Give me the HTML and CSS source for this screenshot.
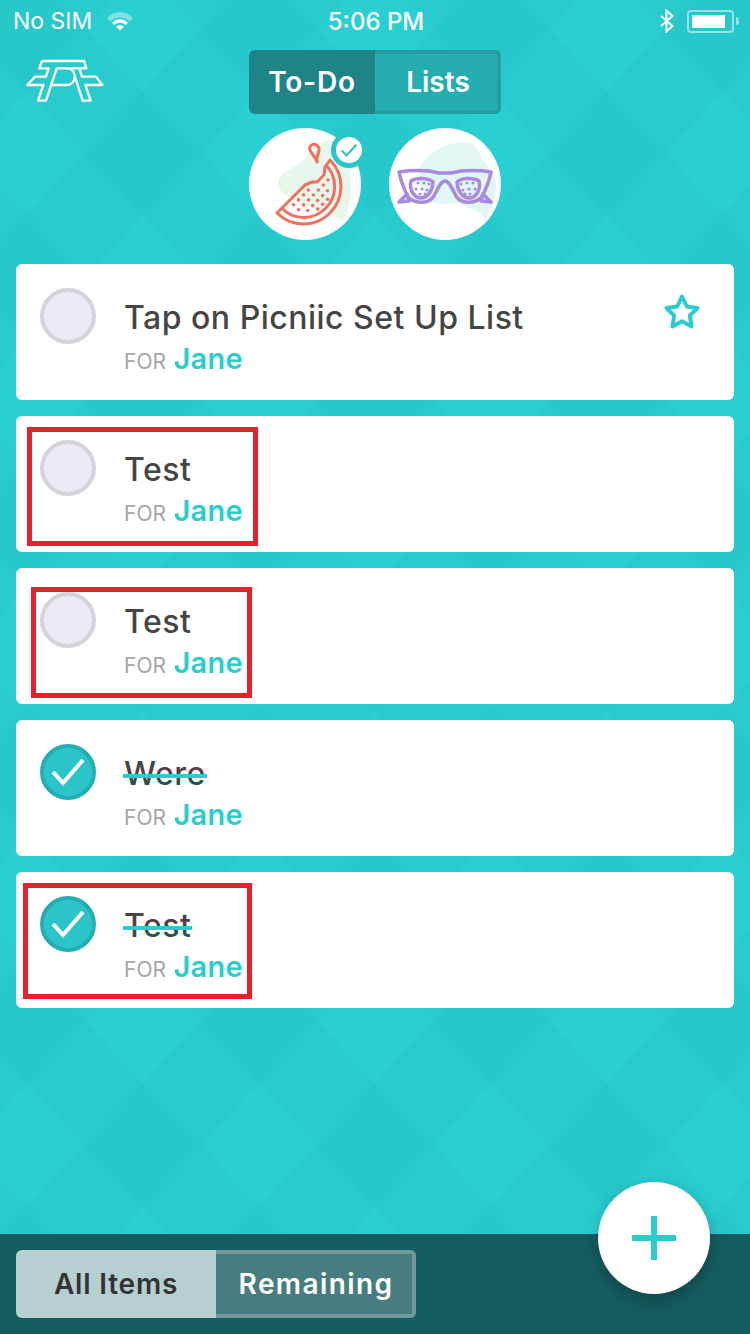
FILE: index.html
```html
<!DOCTYPE html>
<html lang="en">
<head>
<meta charset="UTF-8">
<meta name="viewport" content="width=device-width, initial-scale=1.0">
<title>Picniic To-Do</title>
<link rel="stylesheet" href="styles.css">
</head>
<body>
<div class="screen">
    <div class="status-bar">
        <div class="status-left">
            <span>No SIM</span>
            <svg class="wifi" width="26" height="20" viewBox="0 0 26 20">
                <path d="M0 7 C8 -1 18 -1 26 7 L22.500 10.500 C16.500 5 9.500 5 3.500 10.500 Z" fill="#fff" opacity="0.4"/>
                <path d="M5 11.500 C10 7 16 7 21 11.500 L18.500 14 C15 11 11 11 7.500 14 Z" fill="#fff"/>
                <path d="M9 15.500 C11.500 13.500 14.500 13.500 17 15.500 L13 19.500 Z" fill="#fff"/>
            </svg>
        </div>
        <div class="status-time">5:06 PM</div>
        <div class="status-right">
            <svg width="14" height="24" viewBox="0 0 14 24">
                <path d="M1 7 L12.500 17 L6.500 22.500 V1.500 L12.500 7 L1 17" fill="none" stroke="#fff" stroke-width="2"/>
            </svg>
            <div class="battery"><div class="battery-fill"></div></div>
            <div class="battery-nub"></div>
        </div>
    </div>

    <header class="top-bar">
        <svg class="logo" width="90" height="60" viewBox="0 0 270 180">
            <g fill="none" stroke="#fff" stroke-width="7" stroke-linejoin="round">
                <path d="M66 33 H192 L199 55 H178 L186 80 H228 L247 105 H196 L212 152 H188 L164 78"/>
                <path d="M66 33 L58 55 H86 L78 80 H45 L22 105 H70 L54 152 H78 L110 55 H178"/>
                <path d="M146 55 C172 62 170 105 140 105 H96"/>
            </g>
        </svg>
        <div class="seg">
            <div class="seg-item seg-on">To-Do</div>
            <div class="seg-item">Lists</div>
        </div>
    </header>

    <div class="avatars">
        <div class="avatar">
            <svg width="112" height="112" viewBox="0 0 112 112">
                <path d="M29 55 C30 42 48 42 58 28 C66 14 80 8 92 16 C104 40 106 70 95 92 C84 86 70 84 52 74 C40 70 30 66 29 55 Z" fill="#e9f6ec"/>
                <g fill="none" stroke="#f0705f" stroke-width="3" stroke-linejoin="round">
                    <path d="M28 85 L56 57 L63 54 L68 54 L75 47 L76 39 L81 32 A 37 37 0 0 1 28 85 Z"/>
                    <path d="M33 80.500 A 30 30 0 0 0 76.500 36.500"/>
                    <path d="M62 24 C57 17 67 13 70 20 C71 25 67 26 68 34 C66 29 64 27 62 24 Z"/>
                </g>
                <g fill="#f0705f">
                    <circle cx="44.600" cy="76.800" r="1.800"/><circle cx="49.500" cy="71.900" r="1.800"/><circle cx="54.500" cy="66.900" r="1.800"/><circle cx="59.400" cy="62" r="1.800"/>
                    <circle cx="49.600" cy="81.800" r="1.800"/><circle cx="54.500" cy="76.900" r="1.800"/><circle cx="59.500" cy="71.900" r="1.800"/><circle cx="64.400" cy="67" r="1.800"/><circle cx="69.400" cy="62" r="1.800"/><circle cx="74.300" cy="57.100" r="1.800"/>
                    <circle cx="58.700" cy="82.500" r="1.800"/><circle cx="63.700" cy="77.600" r="1.800"/><circle cx="68.600" cy="72.600" r="1.800"/><circle cx="73.600" cy="67.600" r="1.800"/><circle cx="78.500" cy="62.700" r="1.800"/>
                    <circle cx="68.700" cy="81.100" r="1.800"/><circle cx="73.600" cy="76.200" r="1.800"/><circle cx="78.600" cy="71.200" r="1.800"/><circle cx="79" cy="52" r="1.800"/>
                </g>
            </svg>
            <div class="avatar-badge">
                <svg width="22" height="18" viewBox="0 0 22 18">
                    <path d="M2 9 L8 15 L20 2" fill="none" stroke="#2ac5c8" stroke-width="2.500"/>
                </svg>
            </div>
        </div>
        <div class="avatar">
            <svg width="112" height="112" viewBox="0 0 112 112">
                <path d="M33 35 C42 22 62 12 80 15 C92 18 92 36 104 44 C110 60 106 78 96 92 C92 82 78 80 72 76 C60 74 52 78 44 74 C30 64 26 46 33 35 Z" fill="#e3f6f6"/>
                <g fill="none" stroke="#a88bdc" stroke-width="3.500" stroke-linejoin="round">
                    <path d="M10 44 C24 42 38 42 50 45 H62 C74 42 88 42 102 44 L100 52 C98 58 96 64 92 70 C84 76 72 76 67 68 C63 60 60 53 56 53 C52 53 49 60 45 68 C40 76 28 76 20 70 C16 64 14 58 12 52 Z"/>
                    <path d="M22 53 C28 49 40 50 44 54 C44 60 40 70 32 70 C24 70 20 60 22 53 Z"/>
                    <path d="M68 54 C72 50 84 49 90 53 C92 60 88 70 80 70 C72 70 68 60 68 54 Z"/>
                    <path d="M10 74 L18 66 L20 73 Z"/>
                    <path d="M102 74 L94 66 L92 73 Z"/>
                </g>
                <g fill="#a88bdc">
                    <circle cx="29" cy="55" r="1.500"/><circle cx="35" cy="55" r="1.500"/><circle cx="40" cy="56" r="1.500"/>
                    <circle cx="27" cy="61" r="1.500"/><circle cx="33" cy="61" r="1.500"/><circle cx="38" cy="62" r="1.500"/>
                    <circle cx="31" cy="66" r="1.500"/><circle cx="36" cy="66" r="1.500"/>
                    <circle cx="72" cy="56" r="1.500"/><circle cx="78" cy="55" r="1.500"/><circle cx="84" cy="55" r="1.500"/>
                    <circle cx="74" cy="62" r="1.500"/><circle cx="80" cy="61" r="1.500"/><circle cx="86" cy="61" r="1.500"/>
                    <circle cx="76" cy="66" r="1.500"/><circle cx="81" cy="66" r="1.500"/>
                </g>
            </svg>
        </div>
    </div>

    <main class="todo-list">
        <div class="card">
            <div class="check"></div>
            <div class="card-text">
                <div class="title">Tap on Picniic Set Up List</div>
                <div class="owner"><span class="for">FOR</span> <span class="name">Jane</span></div>
            </div>
            <svg class="star" width="38" height="38" viewBox="0 0 38 38">
                <path d="M19 3.500 L23.800 13.500 L34.500 15 L26.800 22.700 L28.600 33.500 L19 28.300 L9.400 33.500 L11.200 22.700 L3.500 15 L14.200 13.500 Z" fill="none" stroke="#2accce" stroke-width="4" stroke-linejoin="round"/>
            </svg>
        </div>
        <div class="card">
            <div class="check"></div>
            <div class="card-text">
                <div class="title">Test</div>
                <div class="owner"><span class="for">FOR</span> <span class="name">Jane</span></div>
            </div>
            <div class="mark mark-one"></div>
        </div>
        <div class="card">
            <div class="check"></div>
            <div class="card-text">
                <div class="title">Test</div>
                <div class="owner"><span class="for">FOR</span> <span class="name">Jane</span></div>
            </div>
            <div class="mark mark-two"></div>
        </div>
        <div class="card">
            <div class="check check-done">
                <svg width="34" height="28" viewBox="0 0 34 28"><path d="M2 14 L12 25 L32 2" fill="none" stroke="#fff" stroke-width="4"/></svg>
            </div>
            <div class="card-text">
                <div class="title"><span class="title-done">Were</span></div>
                <div class="owner"><span class="for">FOR</span> <span class="name">Jane</span></div>
            </div>
        </div>
        <div class="card">
            <div class="check check-done">
                <svg width="34" height="28" viewBox="0 0 34 28"><path d="M2 14 L12 25 L32 2" fill="none" stroke="#fff" stroke-width="4"/></svg>
            </div>
            <div class="card-text">
                <div class="title"><span class="title-done">Test</span></div>
                <div class="owner"><span class="for">FOR</span> <span class="name">Jane</span></div>
            </div>
            <div class="mark mark-three"></div>
        </div>
    </main>

    <footer class="bottom-bar">
        <div class="filter">
            <div class="filter-item filter-on">All Items</div>
            <div class="filter-item">Remaining</div>
        </div>
        <div class="fab">
            <svg width="46" height="46" viewBox="0 0 46 46"><path d="M23 1 V45 M1 23 H45" stroke="#2accce" stroke-width="6"/></svg>
        </div>
    </footer>
</div>
</body>
</html>
```

FILE: styles.css
```css
* {
    box-sizing: border-box;
}

body {
    margin: 0;
    font-family: Inter, "Noto Sans", sans-serif;
}

/* harlequin background: two sets of diagonal bands, 232x248 tile */
.screen {
    width: 750px;
    height: 1334px;
    display: flex;
    flex-direction: column;
    overflow: hidden;
    background-color: #2acfd1;
    background-image:
        linear-gradient(to bottom right,
            rgba(20, 110, 120, 0.04) 12%, rgba(20, 110, 120, 0) 13%,
            rgba(20, 110, 120, 0) 37%, rgba(20, 110, 120, 0.04) 38%,
            rgba(20, 110, 120, 0.04) 62%, rgba(20, 110, 120, 0) 63%,
            rgba(20, 110, 120, 0) 87%, rgba(20, 110, 120, 0.04) 88%),
        linear-gradient(to top right,
            rgba(20, 110, 120, 0.04) 12%, rgba(20, 110, 120, 0) 13%,
            rgba(20, 110, 120, 0) 37%, rgba(20, 110, 120, 0.04) 38%,
            rgba(20, 110, 120, 0.04) 62%, rgba(20, 110, 120, 0) 63%,
            rgba(20, 110, 120, 0) 87%, rgba(20, 110, 120, 0.04) 88%);
    background-size: 232px 248px;
    background-position: 143px 153px;
}

.status-bar {
    height: 40px;
    flex: none;
    display: grid;
    grid-template-columns: 1fr auto 1fr;
    align-items: center;
    padding: 2px 11px 0 13px;
    color: #fff;
    font-size: 23px;
}

.status-left {
    display: flex;
    align-items: center;
    gap: 15px;
}

.status-time {
    font-size: 24px;
    font-weight: 500;
}

.status-right {
    display: flex;
    align-items: center;
    justify-content: flex-end;
}

.status-right svg {
    margin-right: 13px;
}

.battery {
    width: 47px;
    height: 23px;
    padding: 3px;
    border: 2px solid rgba(255, 255, 255, 0.5);
    border-radius: 4px;
}

.battery-fill {
    width: 33px;
    height: 100%;
    background: #fff;
}

.battery-nub {
    width: 3px;
    height: 8px;
    margin-left: 2px;
    background: rgba(255, 255, 255, 0.5);
    border-radius: 0 3px 3px 0;
}

.top-bar {
    flex: none;
    margin-top: 10px;
    height: 64px;
    display: grid;
    grid-template-columns: 1fr auto 1fr;
}

.logo {
    margin-left: 20px;
}

.seg {
    display: flex;
    width: 252px;
    height: 64px;
    border-radius: 6px;
    overflow: hidden;
    color: #fff;
    font-size: 28px;
    font-weight: 600;
}

.seg-item {
    flex: 0 0 50%;
    display: flex;
    align-items: center;
    justify-content: center;
    padding-left: 4px;
    border: 4px solid #229ea3;
    border-left: 0;
    background: #25adb0;
}

.seg-on {
    padding-left: 0;
    border: 0;
    background: #1f8488;
    letter-spacing: 0.8px;
}

.avatars {
    flex: none;
    margin-top: 14px;
    display: flex;
    justify-content: center;
    gap: 28px;
}

.avatar {
    position: relative;
    width: 112px;
    height: 112px;
    border-radius: 50%;
    background: #fff;
}

.avatar > svg {
    display: block;
}

.avatar-badge {
    position: absolute;
    top: 4px;
    right: -6px;
    width: 36px;
    height: 36px;
    display: flex;
    align-items: center;
    justify-content: center;
    border: 5px solid #2ac5c8;
    border-radius: 50%;
    background: #fff;
}

.avatar-badge svg {
    width: 18px;
    height: 15px;
}

.todo-list {
    flex: none;
    margin-top: 24px;
    padding: 0 16px;
    display: flex;
    flex-direction: column;
    gap: 16px;
}

.card {
    position: relative;
    height: 136px;
    padding: 24px;
    display: flex;
    gap: 28px;
    background: #fff;
    border-radius: 6px;
}

.check {
    flex: none;
    width: 56px;
    height: 56px;
    display: flex;
    align-items: center;
    justify-content: center;
    border: 4px solid #d4d4dc;
    border-radius: 50%;
    background: #ecebf3;
}

.check-done {
    border-color: #25aeb2;
    background: #2bc4c8;
}

.card-text {
    flex: 1;
}

.title {
    height: 44px;
    margin-top: 8px;
    line-height: 44px;
    font-size: 32px;
    font-weight: 500;
    letter-spacing: 0.5px;
    color: #454545;
}

.title-done {
    position: relative;
    display: inline-block;
}

/* teal strike line, sits a little lower than the browser's line-through */
.title-done::after {
    content: "";
    position: absolute;
    left: -1px;
    right: -1px;
    top: 22px;
    height: 4px;
    background: #2accce;
}

.owner {
    margin-top: -1px;
    line-height: 40px;
}

.for {
    font-size: 21px;
    color: #a5a5a8;
}

.name {
    margin-left: 3px;
    font-size: 29px;
    font-weight: 600;
    letter-spacing: 0.3px;
    color: #2accce;
}

.star {
    position: absolute;
    top: 29px;
    right: 33px;
}

/* red boxes drawn over the screenshot */
.mark {
    position: absolute;
    border: 5px solid #e8202c;
}

.mark-one {
    left: 11px;
    top: 11px;
    width: 231px;
    height: 119px;
}

.mark-two {
    left: 15px;
    top: 19px;
    width: 221px;
    height: 111px;
}

.mark-three {
    left: 7px;
    top: 11px;
    width: 229px;
    height: 116px;
}

.bottom-bar {
    position: relative;
    flex: none;
    margin-top: auto;
    height: 100px;
    padding: 16px;
    background: #155c60;
}

.filter {
    display: flex;
    width: 400px;
    height: 68px;
    border-radius: 6px;
    overflow: hidden;
    font-size: 28px;
    font-weight: 600;
    letter-spacing: 1.4px;
}

.filter-item {
    flex: 0 0 50%;
    display: flex;
    align-items: center;
    justify-content: center;
    padding-left: 4px;
    color: #fff;
    background: #477d80;
    border: 4px solid #72999b;
    border-left: 0;
}

.filter-on {
    padding-left: 0;
    color: #333;
    background: #b8cfd1;
    border: 0;
    letter-spacing: 0.8px;
}

.fab {
    position: absolute;
    right: 40px;
    top: -52px;
    width: 112px;
    height: 112px;
    display: flex;
    align-items: center;
    justify-content: center;
    border-radius: 50%;
    background: #fff;
    box-shadow: 0 6px 16px rgba(0, 0, 0, 0.25);
}
```
